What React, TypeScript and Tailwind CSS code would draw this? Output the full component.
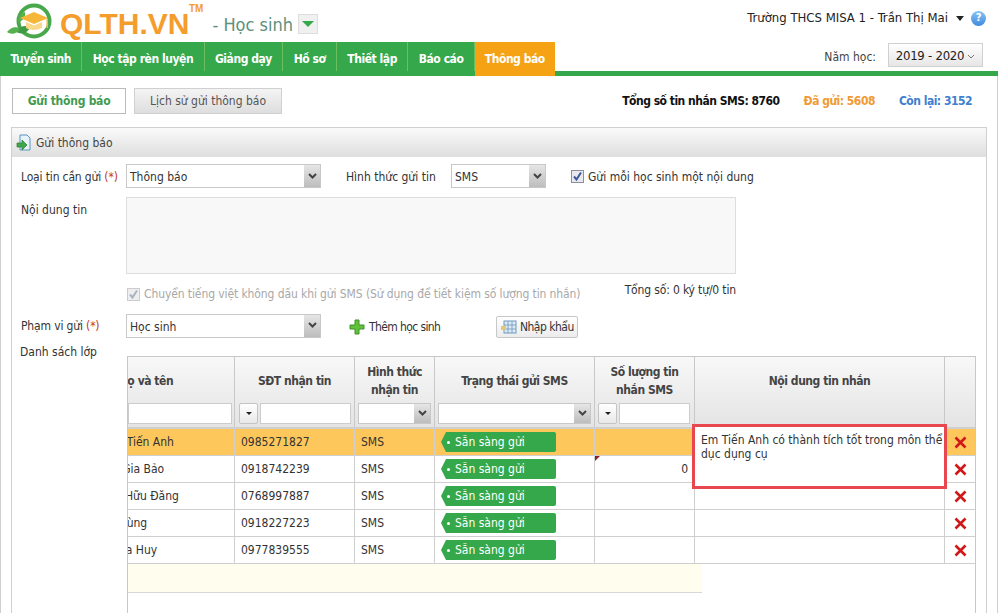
const navItems = ['Tuyển sinh', 'Học tập rèn luyện', 'Giảng dạy', 'Hồ sơ', 'Thiết lập', 'Báo cáo']

const students = [
  { name: 'Nguyễn Vũ Tiến Anh', phone: '0985271827' },
  { name: 'Phạm Văn Gia Bảo', phone: '0918742239' },
  { name: 'Nguyễn Lê Hữu Đăng', phone: '0768997887' },
  { name: 'Phan Văn Hùng', phone: '0918227223' },
  { name: 'Trần Văn Gia Huy', phone: '0977839555' },
]

const colClass = 'grid grid-cols-[177px_120px_80px_160px_100px_250px_31px]'

function Logo() {
  return (
    <svg width="54" height="38" viewBox="0 0 54 38" className="shrink-0">
      <circle cx="30" cy="19" r="15.5" fill="none" stroke="#4aa84c" strokeWidth="4" />
      <path d="M12 30c4-6 9-7 14-5-2 6-8 8-14 5z" fill="#3f9b43" />
      <path d="M3 30c4-5 9-6 13-3-3 5-9 6-13 3z" fill="#57b04f" />
      <path d="M14 20c0-6 3-9 7-10 1 5-2 9-7 10z" fill="#57b04f" />
      <path d="M30 10l14 6-14 6-14-6z" fill="#f6b63a" />
      <path d="M22 20v6c4 2.500 11 2.500 16 0v-6l-8 3.500z" fill="#f9d88a" />
      <rect x="42.500" y="17" width="1.500" height="9" fill="#f6b63a" />
    </svg>
  )
}

function SelectBox({ value, className, height = 'h-6' }: { value?: string; className: string; height?: string }) {
  return (
    <div className={`flex ${height} items-stretch border border-[#c8c8c8] bg-white ${className}`}>
      <span className="flex-1 truncate pl-[3px] pt-[1px] leading-[22px] text-[#333]">{value}</span>
      <span className="flex w-[16px] items-center justify-center bg-gradient-to-b from-[#e6e6e6] to-[#bdbdbd]">
        <svg width="9" height="7" viewBox="0 0 9 7">
          <path d="M1 1l3.500 3.500L8 1" fill="none" stroke="#444" strokeWidth="2" />
        </svg>
      </span>
    </div>
  )
}

function CheckBox({ disabled }: { disabled?: boolean }) {
  return (
    <span className={`flex h-[13px] w-[13px] shrink-0 items-center justify-center border ${disabled ? 'border-[#ccc] bg-[#eee]' : 'border-[#8e8e9a] bg-[#e8e8f0]'}`}>
      <svg width="11" height="11" viewBox="0 0 11 11">
        <path d="M2 5.500l2.500 3L9 1.500" fill="none" stroke={disabled ? '#a9b3c6' : '#3f5a96'} strokeWidth="2" />
      </svg>
    </span>
  )
}

function FilterButton() {
  return (
    <span className="flex h-[21px] w-[19px] shrink-0 items-center justify-center rounded-[2px] border border-[#c4c4c4] bg-gradient-to-b from-white to-[#e8e8e8]">
      <span className="border-x-[3px] border-t-[3px] border-x-transparent border-t-[#222]" />
    </span>
  )
}

function FilterInput({ className }: { className: string }) {
  return <span className={`block h-[21px] border border-[#ccc] bg-white ${className}`} />
}

function HeaderCell({ children, className = '' }: { children?: React.ReactNode; className?: string }) {
  return (
    <div className={`flex flex-col border-r border-[#c8c8c8] ${className}`}>
      <div className="flex h-[46px] items-center justify-center pt-[1px] text-center font-bold leading-[18px] tracking-[-0.45px] text-[#444]">{children}</div>
    </div>
  )
}

function RemoveIcon() {
  return (
    <svg width="13" height="13" viewBox="0 0 13 13">
      <path d="M1.500 1.500l10 10M11.500 1.500l-10 10" stroke="#d01818" strokeWidth="2.600" />
    </svg>
  )
}

function StudentRow({ name, phone, active, count }: { name: string; phone: string; active: boolean; count?: string }) {
  const cell = 'flex items-center border-r border-[#cfcfcf] px-[6px]'
  return (
    <div className={`${colClass} h-[27px] border-b border-[#cfcfcf] text-[#333] ${active ? 'bg-[#fec75c]' : 'bg-white'}`}>
      <div className={`${cell} whitespace-nowrap`}>{name}</div>
      <div className={cell}>{phone}</div>
      <div className={cell}>SMS</div>
      <div className={cell}>
        <span className="flex h-[20px] w-[115px] items-center rounded-r-[2px] bg-[#34a84a] pl-[6px] text-white [clip-path:polygon(5px_0,100%_0,100%_100%,5px_100%,0_50%)]">
          <span className="mr-[5px] h-[3px] w-[3px] rounded-full bg-white" />
          Sẵn sàng gửi
        </span>
      </div>
      <div className={`${cell} justify-end relative`}>
        {count && <span className="absolute left-0 top-0 border-r-[5px] border-t-[5px] border-r-transparent border-t-[#8c1c2c]" />}
        {count}
      </div>
      <div className={cell} />
      <div className="flex items-center justify-center">
        <RemoveIcon />
      </div>
    </div>
  )
}

export default function App() {
  return (
    <div className="h-[613px] w-[998px] overflow-hidden bg-white font-['DejaVu_Sans_Condensed','DejaVu_Sans',sans-serif] text-[12px] text-[#333] [font-stretch:condensed]">
      <header className="flex h-[42px] items-center">
        <div className="ml-[4px] mr-[2px]">
          <Logo />
        </div>
        <div className="relative mt-[6px] font-['Liberation_Sans',sans-serif] text-[30px] font-bold leading-none text-[#f59d2c] [font-stretch:normal]">
          QLTH.VN
          <span className="absolute -right-[14px] -top-[5px] text-[10px]">TM</span>
        </div>
        <span className="ml-[23px] mt-[6px] text-[18px] text-[#5e917c]">- Học sinh</span>
        <span className="ml-[5px] mt-[6px] flex h-[20px] w-[20px] items-center justify-center border border-[#ddd] bg-[#f0f0f0]">
          <span className="border-x-[6px] border-t-[6px] border-x-transparent border-t-[#34a84a]" />
        </span>
        <div className="mb-[6px] ml-auto mr-[12px] flex items-center text-[13px] text-[#222]">
          <span>Trường THCS MISA 1 - Trần Thị Mai</span>
          <span className="ml-[8px] border-x-[4px] border-t-[5px] border-x-transparent border-t-[#222]" />
          <span className="ml-[7px] flex h-[15px] w-[15px] items-center justify-center rounded-full bg-gradient-to-b from-[#8cc4f0] to-[#3d8ae0] text-[11px] font-bold text-white">?</span>
        </div>
      </header>

      <nav className="flex h-[34px] items-stretch border-b-[5px] border-[#34a84a]">
        {navItems.map((item) => (
          <div key={item} className="flex items-center border-r border-[#6cbf5c] bg-[#34a84a] px-[10.4px] pt-[5px] font-bold tracking-[-0.45px] text-white">
            {item}
          </div>
        ))}
        <div className="-mb-[5px] flex w-[80px] items-center justify-center bg-[#f5a314] font-bold tracking-[-0.45px] text-white">Thông báo</div>
        <div className="ml-auto mr-[15px] flex items-start">
          <span className="mr-[12px] mt-[6px] text-[#444]">Năm học:</span>
          <span className="mt-[1px] flex h-[24px] w-[95px] items-center justify-center gap-[3px] border border-[#d0d0d0] bg-gradient-to-b from-white to-[#e6e6e6] pt-[2px] text-[13px] tracking-[-0.25px] text-[#222]">
            2019 - 2020
            <svg width="8" height="5" viewBox="0 0 8 5">
              <path d="M1 1l3 3 3-3" fill="none" stroke="#777" />
            </svg>
          </span>
        </div>
      </nav>

      <main className="h-[537px] border-x border-[#d0d0d0] px-[10px] pt-[12px]">
        <div className="flex items-center">
          <div className="ml-[1px] flex h-[26px] w-[114px] items-center justify-center border border-[#bbb] font-bold tracking-[-0.25px] text-[#3f9b50]">Gửi thông báo</div>
          <div className="ml-[8px] flex h-[26px] w-[148px] items-center justify-center border border-[#d0d0d0] bg-gradient-to-b from-[#f4f4f4] to-[#dedede] text-[#555]">Lịch sử gửi thông báo</div>
          <div className="ml-auto mr-[15px] flex font-bold tracking-[-0.5px]">
            <span className="text-[#111]">Tổng số tin nhắn SMS: 8760</span>
            <span className="ml-[24px] text-[#f09a36]">Đã gửi: 5608</span>
            <span className="ml-[24px] text-[#3f7fcf]">Còn lại: 3152</span>
          </div>
        </div>

        <section className="mt-[13px] h-[500px] border border-[#d0d0d0]">
          <div className="flex h-[29px] items-center bg-gradient-to-b from-[#fafafa] to-[#dedede] pl-[4px] text-[#444]">
            <svg width="16" height="17" viewBox="0 0 16 17" className="mr-[4px]">
              <path d="M4 1h7l3 3v12H4z" fill="#e8f2fa" stroke="#5a93bd" />
              <path d="M1 9h5V6l5 5-5 5v-3H1z" fill="#3fa64a" stroke="#2a7d35" strokeWidth="0.700" />
            </svg>
            Gửi thông báo
          </div>

          <div className="pl-[9px]">
            <div className="mt-[7px] flex items-center">
              <span className="w-[105px] shrink-0 pt-[1px] tracking-[-0.15px]">Loại tin cần gửi <span className="text-[#c0392b]">(*)</span></span>
              <SelectBox value="Thông báo" className="w-[195px]" />
              <span className="ml-[25px] w-[105px] pt-[1px]">Hình thức gửi tin</span>
              <SelectBox value="SMS" className="w-[95px]" />
              <span className="ml-[25px] mr-[4px]"><CheckBox /></span>
              <span className="pt-[1px]">Gửi mỗi học sinh một nội dung</span>
            </div>

            <div className="mt-[9px] flex">
              <span className="mt-[4px] w-[105px] shrink-0">Nội dung tin</span>
              <div className="h-[77px] w-[610px] border border-[#ddd] bg-[#f8f8f8]" />
            </div>

            <div className="mt-[11px] flex items-center">
              <span className="ml-[106px] mr-[4px]"><CheckBox disabled /></span>
              <span className="tracking-[-0.1px] text-[#a8a8a8]">Chuyển tiếng việt không dấu khi gửi SMS (Sử dụng để tiết kiệm số lượng tin nhắn)</span>
              <span className="ml-auto mr-[250px] -translate-y-[4px] tracking-[-0.15px]">Tổng số: 0 ký tự/0 tin</span>
            </div>

            <div className="mt-[10px] flex items-center">
              <span className="w-[105px] shrink-0 tracking-[-0.15px]">Phạm vi gửi <span className="text-[#c0392b]">(*)</span></span>
              <SelectBox value="Học sinh" className="w-[195px]" />
              <svg width="16" height="16" viewBox="0 0 16 16" className="ml-[28px] mt-[3px]">
                <path d="M6 1h4v5h5v4h-5v5H6v-5H1V6h5z" fill="#62c13a" stroke="#3b9226" />
              </svg>
              <span className="ml-[4px] mt-[3px] tracking-[-0.6px]">Thêm học sinh</span>
              <span className="ml-[56px] mt-[3px] flex h-[22px] w-[82px] items-center justify-center gap-[3px] rounded-[2px] border border-[#c8c8c8] bg-gradient-to-b from-white to-[#ececec] tracking-[-0.5px]">
                <svg width="16" height="14" viewBox="0 0 16 14">
                  <rect x="3" y="1" width="12" height="12" fill="#dceaf6" stroke="#6f9bbf" />
                  <path d="M3 5h12M3 9h12M7 1v12M11 1v12" stroke="#6f9bbf" strokeWidth="0.800" />
                  <path d="M0 6h5v4H0z" fill="#e3c77a" />
                </svg>
                Nhập khẩu
              </span>
            </div>

            <div className="-ml-[1px] mt-[7px] leading-[14px]">Danh sách lớp</div>
          </div>

          <div className="relative ml-[115px] -mt-[3px] h-[300px] w-[849px] overflow-hidden border-x border-t border-[#c8c8c8]">
            <div className="-ml-[70px] w-[918px]">
              <div className={`${colClass} h-[72px] border-b-[2px] border-[#cfcfcf] bg-gradient-to-b from-[#f8f8f8] to-[#e4e4e4]`}>
                <HeaderCell>Họ và tên</HeaderCell>
                <HeaderCell>SĐT nhận tin</HeaderCell>
                <HeaderCell>Hình thức<br />nhận tin</HeaderCell>
                <HeaderCell>Trạng thái gửi SMS</HeaderCell>
                <HeaderCell>Số lượng tin<br />nhắn SMS</HeaderCell>
                <HeaderCell>Nội dung tin nhắn</HeaderCell>
                <div />
              </div>

              <div className="-mt-[26px] mb-[5px] flex h-[21px] items-stretch">
                <FilterInput className="ml-[70px] w-[104px]" />
                <span className="ml-[7px]"><FilterButton /></span>
                <FilterInput className="ml-[2px] w-[91px]" />
                <SelectBox className="ml-[7px] w-[73px]" height="h-[21px]" />
                <SelectBox className="ml-[7px] w-[153px]" height="h-[21px]" />
                <span className="ml-[7px]"><FilterButton /></span>
                <FilterInput className="ml-[2px] w-[71px]" />
              </div>

              {students.map((s, i) => (
                <StudentRow key={s.phone} name={s.name} phone={s.phone} active={i === 0} count={i === 1 ? '0' : undefined} />
              ))}

              <div className="h-[29px] w-[644px] border-b border-[#d8d8d8] bg-[#fefdee]" />
            </div>

            <div className="absolute left-[564px] top-[67px] h-[65px] w-[255px] border-[3px] border-[#e8474f] bg-white pl-[6px] pt-[6px] leading-[14px] text-[#333]">
              Em Tiến Anh có thành tích tốt trong môn thể dục dụng cụ
            </div>
          </div>
        </section>
      </main>
    </div>
  )
}
